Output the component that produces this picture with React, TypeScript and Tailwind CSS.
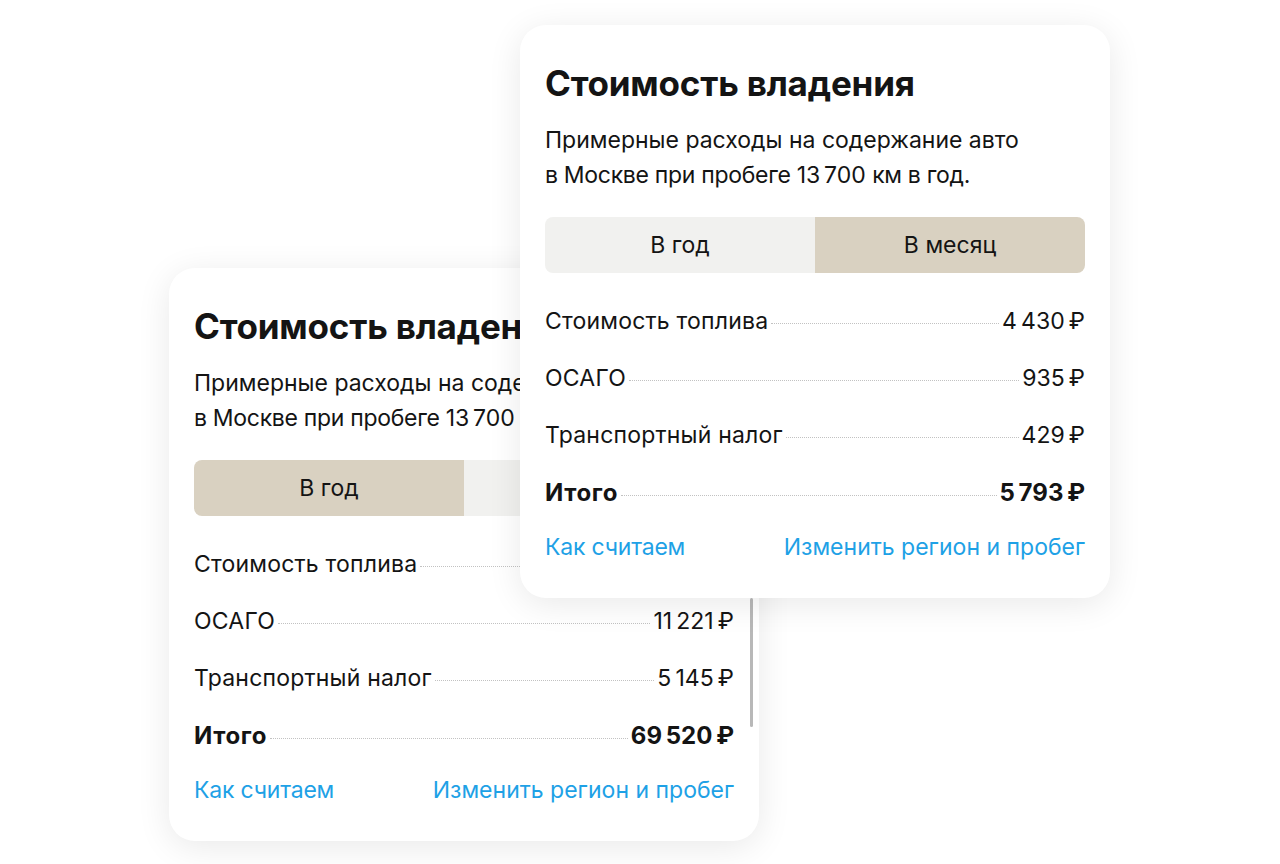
import React from "react";

type Row = { label: string; value: string };

type CardProps = {
  period: "year" | "month";
  rows: Row[];
  total: string;
  scrollbar?: boolean;
  className?: string;
};

function CostRow({ label, value, bold }: Row & { bold?: boolean }) {
  return (
    <div className={`flex items-baseline h-[57px] pt-[14px] ${bold ? "font-bold text-[24px]" : ""}`}>
      <span className={`whitespace-nowrap ${bold ? "tracking-[0.6px]" : "tracking-[0.2px]"}`}>{label}</span>
      <span className="flex-1 mx-[3px] border-b border-dotted border-[#c2c2c2] translate-y-[-5px]" />
      <span className="whitespace-nowrap tracking-[-0.2px]">{value}</span>
    </div>
  );
}

function OwnershipCard({ period, rows, total, scrollbar, className }: CardProps) {
  return (
    <div
      className={`w-[590px] h-[573px] rounded-[26px] bg-white shadow-[0_6px_34px_rgba(0,0,0,0.09)] px-[25px] pt-[38px] text-[#141414] text-[23px] leading-[35px] ${className ?? ""}`}
    >
      <h2 className="text-[35px] leading-[40px] font-bold tracking-[-0.2px]">Стоимость владения</h2>
      <p className="mt-[20px]">
        Примерные расходы на содержание авто
        <br />
        <span className="tracking-[-0.3px]">в Москве при пробеге 13{"\u202F"}700 км в год.</span>
      </p>
      <div className="mt-[24px] flex h-[56px] rounded-[8px] overflow-hidden">
        <div
          className={`flex-1 flex items-center justify-center ${period === "year" ? "bg-[#d9d1c1]" : "bg-[#f1f1ef]"}`}
        >
          В год
        </div>
        <div
          className={`flex-1 flex items-center justify-center ${period === "month" ? "bg-[#d9d1c1]" : "bg-[#f1f1ef]"}`}
        >
          В месяц
        </div>
      </div>
      <div className="mt-[17px]">
        {rows.map((r) => (
          <CostRow key={r.label} {...r} />
        ))}
        <CostRow label="Итого" value={total} bold />
      </div>
      <div className="mt-[12px] flex justify-between text-[#1ea1e6]">
        <span className="tracking-[-0.2px]">Как считаем</span>
        <span>Изменить регион и пробег</span>
      </div>
      {scrollbar && (
        <div className="absolute right-[6px] top-[330px] w-[3px] h-[129px] rounded-full bg-[#b8b8b8]" />
      )}
    </div>
  );
}

const NB = "\u202F";

export default function App() {
  return (
    <div
      className="relative w-[1280px] h-[864px] bg-white overflow-hidden"
      style={{ fontFamily: "Inter, 'Noto Sans', sans-serif" }}
    >
      <OwnershipCard
        className="absolute left-[169px] top-[268px]"
        period="year"
        rows={[
          { label: "Стоимость топлива", value: `53${NB}154${NB}₽` },
          { label: "ОСАГО", value: `11${NB}221${NB}₽` },
          { label: "Транспортный налог", value: `5${NB}145${NB}₽` },
        ]}
        total={`69${NB}520${NB}₽`}
        scrollbar
      />
      <OwnershipCard
        className="absolute left-[520px] top-[25px]"
        period="month"
        rows={[
          { label: "Стоимость топлива", value: `4${NB}430${NB}₽` },
          { label: "ОСАГО", value: `935${NB}₽` },
          { label: "Транспортный налог", value: `429${NB}₽` },
        ]}
        total={`5${NB}793${NB}₽`}
      />
    </div>
  );
}
